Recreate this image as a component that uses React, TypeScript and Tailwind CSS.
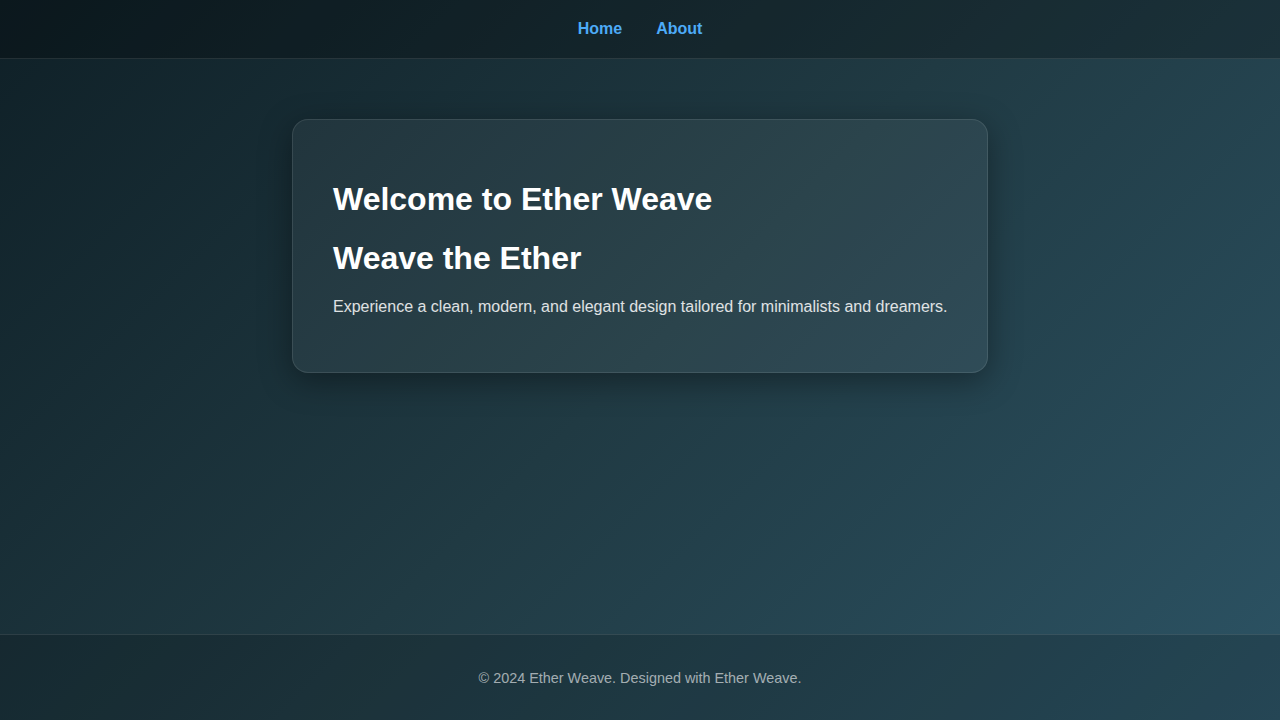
const links = ["Home", "About"];

function App() {
  return (
    <div className="min-h-screen flex flex-col bg-[linear-gradient(135deg,#0f2027,#203a43,#2c5364)] font-['Liberation_Sans',Arial,sans-serif] text-white">
      <header className="h-[59px] flex items-center justify-center gap-[34px] bg-black/25 border-b border-white/10">
        {links.map((l) => (
          <a key={l} href="#" className="text-base font-bold text-[#4dabf7] hover:text-[#74c0fc]">
            {l}
          </a>
        ))}
      </header>

      <main className="flex-1 flex justify-center pt-[60px]">
        <section className="w-[696px] h-fit rounded-2xl border border-white/10 bg-white/5 py-10 pl-10 pr-[38px] shadow-[0_8px_32px_rgba(0,0,0,0.37)]">
          <h1 className="mt-[20px] text-[32px] leading-[38px] font-bold">Welcome to Ether Weave</h1>
          <h2 className="mt-[21px] text-[32px] leading-[38px] font-bold">Weave the Ether</h2>
          <p className="mt-[17px] mb-[12px] text-base leading-[26px] text-white/85 whitespace-nowrap">
            Experience a clean, modern, and elegant design tailored for minimalists and dreamers.
          </p>
        </section>
      </main>

      <footer className="h-[86px] pt-[2px] flex items-center justify-center bg-black/15 border-t border-white/10">
        <p className="text-[14.4px] text-white/60">© 2024 Ether Weave. Designed with Ether Weave.</p>
      </footer>
    </div>
  );
}

export default App;
